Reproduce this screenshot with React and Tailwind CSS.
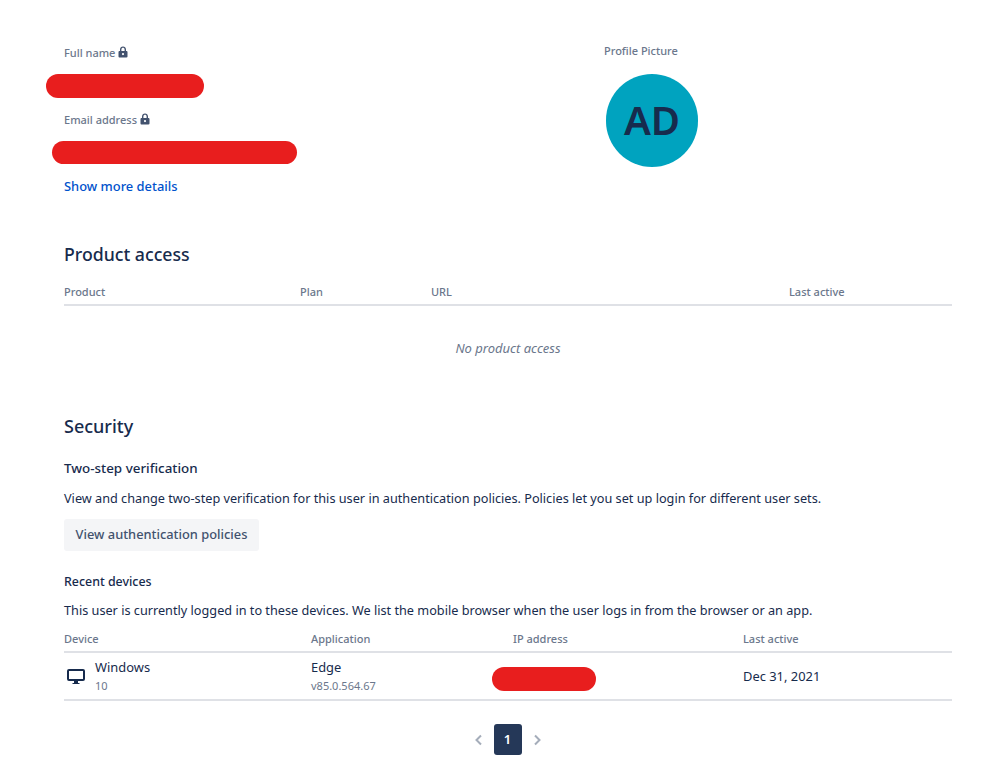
import React from "react";

function Lock() {
  return (
    <svg width="10" height="12" viewBox="0 0 10 12" className="ml-[3px] mb-[3px]">
      <path fillRule="evenodd" fill="#42526e" d="M2 5V3.4C2 1.6 3.3.5 5 .5s3 1.1 3 2.9V5h.6c.5 0 .9.4.9.9v4.7c0 .5-.4.9-.9.9H1.400c-.5 0-.9-.4-.9-.9V5.900c0-.5.4-.9.9-.9H2zm1.400 0h3.200V3.400C6.600 2.400 5.900 1.800 5 1.800s-1.600.6-1.600 1.600V5zM5 7a1.100 1.100 0 100 2.200A1.100 1.100 0 005 7z" />
    </svg>
  );
}

function Redact({ className }) {
  return <div className={"rounded-full bg-[#e81e1e] " + className} />;
}

function Th({ className, children }) {
  return <div className={"text-[11px] font-medium leading-[16px] text-[#6b778c] " + className}>{children}</div>;
}

export default function App() {
  return (
    <div className="h-[767px] w-[999px] overflow-hidden bg-white pl-[64px] pr-[47px] pt-[44px] font-['Noto_Sans','Open_Sans',sans-serif] text-[13px] text-[#172b4d]">
      <div className="flex h-[149px]">
        <div className="w-[540px]">
          <div className="flex h-[16px] items-center pt-[2px] text-[11px] font-medium text-[#6b778c]">
            Full name <Lock />
          </div>
          <Redact className="ml-[-18px] mt-[14px] h-6 w-[158px]" />
          <div className="mt-[14px] flex h-[16px] items-center pt-[1px] text-[11px] font-medium text-[#6b778c]">
            Email address <Lock />
          </div>
          <Redact className="ml-[-12px] mt-[13px] h-[23px] w-[245px]" />
          <div className="mt-[13px] text-[12.9px] font-medium leading-[18px] text-[#0052cc]">Show more details</div>
        </div>
        <div>
          <div className="h-[16px] text-[11px] font-medium leading-[14px] text-[#6b778c]">Profile Picture</div>
          <div className="ml-[2px] mt-[14px] flex h-[93px] w-[92px] items-center justify-center rounded-full bg-[#00a3bf] pb-[2px] text-[40px] font-semibold text-[#172b4d]">
            AD
          </div>
        </div>
      </div>

      <h2 className="mt-[46px] text-[17.7px] font-medium leading-[30px]">Product access</h2>
      <div className="mt-[14px] flex h-[23px] items-start border-b-2 border-[#dfe1e6] pt-[1px]">
        <Th className="w-[236px]">Product</Th>
        <Th className="w-[131px]">Plan</Th>
        <Th className="w-[358px]">URL</Th>
        <Th>Last active</Th>
      </div>
      <div className="mt-[33px] text-center text-[13px] italic leading-[18px] text-[#6b778c]">No product access</div>

      <h2 className="mt-[54px] text-[18px] font-medium leading-[30px]">Security</h2>
      <div className="mt-[18px] text-[13.4px] font-medium leading-[18px]">Two-step verification</div>
      <p className="mt-[12px] text-[12.7px] leading-[18px]">
        View and change two-step verification for this user in authentication policies. Policies let you set up login for different user sets.
      </p>
      <button className="mt-[12px] block h-[32px] w-[195px] rounded-[3px] bg-[#f4f5f7] text-center text-[12.85px] font-medium text-[#42526e]">
        View authentication policies
      </button>
      <div className="mt-[22px] text-[12.4px] font-medium leading-[18px]">Recent devices</div>
      <p className="mt-[10px] text-[12.7px] leading-[18px]">
        This user is currently logged in to these devices. We list the mobile browser when the user logs in from the browser or an app.
      </p>
      <div className="mt-[12px] flex h-[22px] border-b-2 border-[#dfe1e6]">
        <Th className="w-[247px]">Device</Th>
        <Th className="w-[202px]">Application</Th>
        <Th className="w-[230px]">IP address</Th>
        <Th>Last active</Th>
      </div>
      <div className="flex h-[48px] items-center border-b-2 border-[#dfe1e6]">
        <div className="flex w-[247px] items-center">
          <svg width="24" height="24" viewBox="0 0 24 24" className="shrink-0">
            <path fillRule="evenodd" fill="#172b4d" d="M5 5h14a2 2 0 012 2v8a2 2 0 01-2 2h-5v2h1.500v1h-7v-1H10v-2H5a2 2 0 01-2-2V7a2 2 0 012-2zm0 2v8h14V7H5z" />
          </svg>
          <div className="ml-[7px]">
            <div className="text-[12.9px] leading-[18px]">Windows</div>
            <div className="mt-[2px] text-[11px] leading-[16px] text-[#6b778c]">10</div>
          </div>
        </div>
        <div className="w-[181px]">
          <div className="text-[12.9px] leading-[18px]">Edge</div>
          <div className="mt-[2px] text-[11px] leading-[16px] text-[#6b778c]">v85.0.564.67</div>
        </div>
        <div className="w-[251px] pt-[5px]">
          <Redact className="h-6 w-[104px]" />
        </div>
        <div className="pt-[1px] text-[12.9px]">Dec 31, 2021</div>
      </div>
      <div className="mt-[23px] flex items-center justify-center pr-[1px]">
        <svg width="16" height="16" viewBox="0 0 16 16" fill="none" stroke="#a5adba" strokeWidth="2">
          <path d="M10 3.500L5.500 8l4.500 4.500" />
        </svg>
        <div className="mx-[7px] flex h-[31px] w-[28px] items-center justify-center rounded-[3px] bg-[#253858] text-[13px] font-semibold text-white">1</div>
        <svg width="16" height="16" viewBox="0 0 16 16" fill="none" stroke="#a5adba" strokeWidth="2">
          <path d="M6 3.500L10.500 8 6 12.500" />
        </svg>
      </div>
    </div>
  );
}
